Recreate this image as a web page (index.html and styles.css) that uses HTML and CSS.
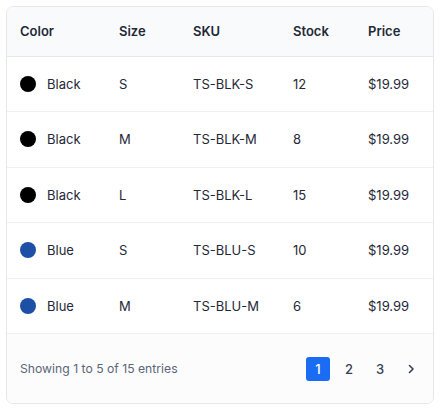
FILE: index.html
```html
<!DOCTYPE html>
<html>
	<head>
		<meta charset="UTF-8">
		<title>Variants</title>
		<link rel="stylesheet" href="styles.css">
	</head>
	<body>
		<div class="card">
			<table class="variants">
				<thead>
					<tr>
						<th class="c-color">Color</th>
						<th class="c-size">Size</th>
						<th class="c-sku">SKU</th>
						<th class="c-stock">Stock</th>
						<th>Price</th>
					</tr>
				</thead>
				<tbody>
					<tr>
						<td><span class="dot black"></span>Black</td>
						<td>S</td>
						<td>TS-BLK-S</td>
						<td>12</td>
						<td>$19.99</td>
					</tr>
					<tr>
						<td><span class="dot black"></span>Black</td>
						<td>M</td>
						<td>TS-BLK-M</td>
						<td>8</td>
						<td>$19.99</td>
					</tr>
					<tr>
						<td><span class="dot black"></span>Black</td>
						<td>L</td>
						<td>TS-BLK-L</td>
						<td>15</td>
						<td>$19.99</td>
					</tr>
					<tr>
						<td><span class="dot blue"></span>Blue</td>
						<td>S</td>
						<td>TS-BLU-S</td>
						<td>10</td>
						<td>$19.99</td>
					</tr>
					<tr>
						<td><span class="dot blue"></span>Blue</td>
						<td>M</td>
						<td>TS-BLU-M</td>
						<td>6</td>
						<td>$19.99</td>
					</tr>
				</tbody>
			</table>
			<div class="footer">
				<span class="info">Showing 1 to 5 of 15 entries</span>
				<div class="pager">
					<a href="#" class="page active">1</a>
					<a href="#" class="page">2</a>
					<a href="#" class="page">3</a>
					<a href="#" class="page">
						<svg width="12" height="12" viewBox="0 0 12 12"><path d="M4.5 2.5 L8 6 L4.5 9.5" fill="none" stroke="#374151" stroke-width="1.6" stroke-linecap="round" stroke-linejoin="round"/></svg>
					</a>
				</div>
			</div>
		</div>
	</body>
</html>
```

FILE: styles.css
```css
* {
	margin: 0;
	padding: 0;
	box-sizing: border-box;
}
body {
	background: #fff;
	font-family: Inter, "Liberation Sans", sans-serif;
	font-size: 13px;
	color: #1f2937;
	padding: 6px;
}

.card {
	width: 428px;
	height: 398px;
	border: 1px solid #e5e7eb;
	border-radius: 7px;
	overflow: hidden;
	background: #fff;
	display: flex;
	flex-direction: column;
}

.variants {
	width: 100%;
	border-collapse: collapse;
	table-layout: fixed;
}
.variants th,
.variants td {
	text-align: left;
	padding: 0 0 0 13px;
	border-bottom: 1px solid #eef0f3;
	white-space: nowrap;
}
.variants th {
	height: 49px;
	font-weight: 600;
	color: #1f2937;
	background: #f9fafb;
	border-bottom-color: #e5e7eb;
}
.variants td {
	height: 55.5px;
}
.c-color { width: 99px; }
.c-size { width: 74px; }
.c-sku { width: 100px; }
.c-stock { width: 75px; }

.dot {
	display: inline-block;
	width: 16px;
	height: 16px;
	border-radius: 50%;
	vertical-align: middle;
	margin: -2px 11px 0 0;
}
.dot.black { background: #000; }
.dot.blue { background: #1e4fa6; }

.footer {
	flex: 1;
	display: flex;
	align-items: center;
	justify-content: space-between;
	padding: 0 10px 0 13px;
	background: #fcfcfd;
}
.info {
	font-size: 12.2px;
	color: #5b6678;
}
.pager {
	display: flex;
	gap: 7px;
}
.page {
	width: 24px;
	height: 24px;
	display: flex;
	align-items: center;
	justify-content: center;
	border-radius: 3px;
	color: #374151;
	text-decoration: none;
	font-weight: 500;
}
.page.active {
	background: #1a6cf2;
	color: #fff;
}
```
